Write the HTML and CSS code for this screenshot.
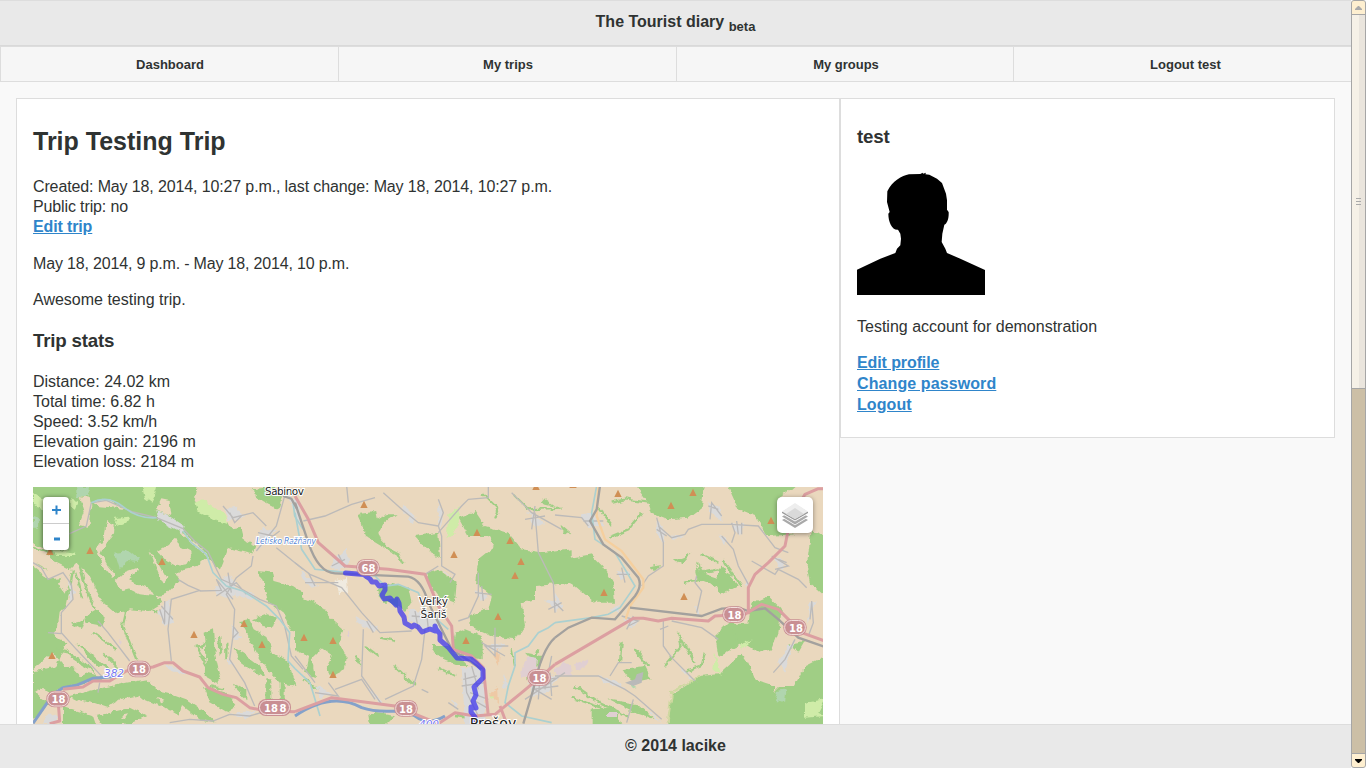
FILE: index.html
```html
<!DOCTYPE html>
<html lang="en">
<head>
<meta charset="utf-8">
<title>The Tourist diary</title>
<link rel="stylesheet" href="styles.css">
</head>
<body>
<div class="page">
  <header class="header"><h1 class="brand">The Tourist diary <sub class="beta">beta</sub></h1></header>
  <nav class="nav">
    <a class="tab">Dashboard</a><a class="tab">My trips</a><a class="tab">My groups</a><a class="tab">Logout test</a>
  </nav>
  <main class="content">
    <section class="card trip">
      <h2 class="title">Trip Testing Trip</h2>
      <p class="text created">Created: May 18, 2014, 10:27 p.m., last change: May 18, 2014, 10:27 p.m.<br>Public trip: no<br><a class="link">Edit trip</a></p>
      <p class="text dates">May 18, 2014, 9 p.m. - May 18, 2014, 10 p.m.</p>
      <p class="text">Awesome testing trip.</p>
      <h3 class="subtitle">Trip stats</h3>
      <p class="text">Distance: 24.02 km<br>Total time: 6.82 h<br><span class="speed">Speed: 3.52 km/h</span><br>Elevation gain: 2196 m<br>Elevation loss: 2184 m</p>
      <div class="map">
        <svg class="tiles" width="790" height="237" viewBox="0 0 790 237">
          <defs>
            <filter id="ragged" x="0" y="0" width="100%" height="100%"><feTurbulence type="fractalNoise" baseFrequency=".13" numOctaves="3" seed="4"/><feDisplacementMap in="SourceGraphic" scale="6" xChannelSelector="R" yChannelSelector="G"/></filter>
            <path id="peak" d="M0-11L11 11H-11Z" fill="#d08f55"/>
            <g id="shield"><rect x="-35" y="-25" width="70" height="50" rx="24" fill="#c98f93"/><rect x="-31" y="-21" width="62" height="42" rx="20" fill="none" stroke="#f3dfdd" stroke-width="3"/></g>
          </defs>
          <rect width="790" height="237" fill="#ead8be"/>
          <g filter="url(#ragged)">
            <rect width="790" height="237" fill="#ead8be"/>
            <!-- western forests -->
            <g transform="translate(0 -1) scale(.33333)">
              <g class="forest">
                <path d="M-9-9H495L485 45 540 95 585 110 595 130 625 125 635 165 670 180 660 205 620 195 585 185 560 250 535 225 500 180 455 140 385 118 365 90 360 70 415 90 410 45 385 40 360 90 310 85 230 45 180 50 165 130 140 130 150 30 90 20 90 40 30 65 30 130 110 190 60 200-9 165Z"/>
                <path d="M-9-9H360L365 90 430 125 480 175 522 212 490 240 450 250 430 265 440 282 400 325 370 330 385 350 345 375 290 370 250 385 205 345 180 290 150 250 110 270 60 260 35 250 0 225Z"/>
                <path d="M-9 235 50 280 95 275 110 310 100 360 80 380 75 420 60 440 75 460 100 470 70 540-9 560ZM155 390 190 370 215 390 210 420 160 410ZM110 410 155 400 145 430ZM130 470 160 490 230 550 190 540ZM100 490 170 540 190 565 120 520ZM60 500 0 550V600L60 590 110 610 120 570Z"/>
                <path d="M0 555 110 545 200 570 210 585 90 600 60 630 30 605 0 625ZM-9 610 50 650 20 690-9 700ZM110 630 190 610 280 590 340 580 380 615 410 650 380 660 310 630 260 640 220 665 190 655 130 640ZM90 660 180 690 190 720H90ZM190 690 290 665 340 690 300 710 210 720ZM335 630 360 610 405 620 460 640 520 680 550 710 500 700 450 660 440 690 390 660Z"/>
                <path d="M515 440 540 430 545 500 565 580 550 590 515 570 520 500ZM555 450 565 450 570 500 560 510ZM490 480 520 470 510 490ZM600 485 640 510 680 540 700 575 660 555 625 530ZM620 405 650 400 665 430 700 450 720 500 770 530 790 600 740 590 700 545 680 520 660 485 645 450ZM660 400 700 385 730 395 720 425 690 420ZM600 590 640 610 640 640 610 615ZM510 600 580 620 610 660 580 680 530 650ZM700 580H715V645H700ZM740 590H755V650H740ZM675 255 720 260 725 285 780 300 810 320V440L770 430 750 380 710 350 695 300ZM650 10 720 3 750 35 740 70 690 45Z"/>
              </g>
              <g class="clearing"><path d="M140 30 170 35 175 60 165 125 140 120 155 80ZM220 105 242 115 240 145 215 180 205 205 225 240 250 270 240 280 205 235 190 190 210 160ZM348 190 365 215 400 275 390 293 375 260ZM375 195 400 180 430 155 440 180 480 200 460 235 430 240 400 225ZM270 260 310 245 315 255 285 280 345 305 360 330 320 325 290 310 270 315 245 285ZM-9 165 35 190 70 230 110 250 130 230 165 265 185 310 200 350 150 330 120 270 60 270 30 240-9 225ZM180 45 225 40 280 70 250 65 190 60ZM90 260 105 290 95 320 75 290Z"/><path d="M120 550 180 550 140 570ZM260 690 285 685 275 700ZM375 635 395 645 380 650Z"/></g>
              <g class="streaks"><path d="M120 250 110 310M140 240 170 340 190 370M130 260 150 340M250 380 280 375 270 420 290 470 310 520M320 360 400 390M180 440 250 490M210 500 270 560M180 510 240 570M490 480 515 520M500 510 530 560M580 470V520M530 600 570 610M60 490 110 500M0 185 60 210"/></g>
              <g class="meadow"><path d="M325-9H375L365 30 355 50 335 35ZM485 50 510 40 580 90 585 115 535 95 490 75ZM250 95 290 92 280 110 245 118ZM60 190 130 200 130 210 70 210ZM0 20 30 40 30 70 0 60ZM110 40 135 45 125 70 110 60Z"/></g>
              <g class="scrub"><path d="M130 3H170V30H130ZM245 200 290 195 320 220 310 228 285 225 260 250ZM0 90 15 100V125H0Z"/></g>
            </g>
            <!-- central forests -->
            <g transform="translate(262 -1) scale(.33333)">
              <g class="forest">
                <path d="M195 80 240 75 245 100 270 85 305 85 265 110 250 140 260 170 235 160 200 130ZM245 315 280 290 340 305 350 350 330 375 300 350 270 350ZM360 150 430 140 435 215 405 200ZM390 260 430 250 485 290 480 350 430 330 400 290ZM0 325 50 345 85 365 110 400 145 430 135 470 155 510 150 550 110 570 95 540 110 510 80 490 50 520 60 570 30 560 40 510 0 490ZM475 480 480 440 510 430 560 450 560 520 500 510ZM410 480 460 480 520 540 490 540 440 520ZM490 95 540 75 570 120 640 140 680 190 750 200 830 190V290L720 300 720 340 680 350 690 420 660 460 590 450 525 420 520 390 580 370 590 330 540 290 550 220 600 180 580 150 520 150ZM220 690 240 680 300 690 270 720H225ZM690 500 740 510 735 550ZM750 40 780 60 740 50Z"/>
              </g>
              <g class="streaks"><path d="M200 110 250 160 280 190 310 205 325 235M190 85 220 150 270 180M560 20 610 70 600 100M660 30 700 70 800 65M180 510 200 540M210 480 250 510M260 455 300 465M300 540 360 600M430 545 480 570M30 580 90 625M480 690 560 700M650 490 660 540M730 490 700 580"/></g>
              <g class="meadow"><path d="M460 85 495 60 490 130 455 160ZM585 620 610 640 590 640Z"/></g>
            </g>
            <!-- eastern forests -->
            <g transform="translate(522 -1) scale(.33333)">
              <g class="forest">
                <path d="M235-9H450L440 65 400 95 340 100 290 80 280 50ZM0 200 50 215 110 205 145 240 175 290 180 350 120 350 60 300 0 265ZM515-9H730L670 40V135L720 145 640 150 600 90 550 70ZM770 130 810 160V330L765 290 755 240ZM420 235 440 260 500 280 480 300 430 280ZM500 240 550 300 500 325 480 290ZM590 350 640 330 680 370 670 440 650 490 610 500 570 470 490 510 480 450 520 410 580 410ZM340 713 350 625 435 570 490 565 560 500 580 530 600 580 660 600 750 540 810 510V730H340ZM700 475 750 465 730 500ZM200 550 270 540 290 580 240 590 210 570ZM110 670 180 665 200 720H110ZM160 640 250 655 300 700 240 680ZM360 220 410 200 380 235ZM280 240 320 235 300 255ZM15 115 50 145 25 140Z"/>
              </g>
              <path class="clearing" d="M660 560 750 540 720 600 675 600 660 615Z"/>
              <g class="streaks"><path d="M170 50 210 40 280 50M160 155 220 130 260 80M130 65 170 120M430 230 440 260 490 250 530 270M500 220 560 300M390 290 450 280M440 205 490 230M200 470 195 530M240 490 280 540M330 540 380 480 370 440M380 460 420 530M450 500 440 540 390 560M530 430 550 460M60 600 130 650 220 690M50 635 180 680"/></g>
              <g class="meadow"><path d="M480 500 500 570 475 550ZM590 460 560 490 550 480ZM750 650 810 640 790 680 810 690 750 695Z"/></g>
              <path d="M355 612 435 572M352 615 337 713" fill="none" stroke="#cfd8a0" stroke-width="6"/>
              <g class="scrub"><path d="M665 615 695 610 690 650 660 645ZM225 590 245 600 230 605Z"/></g>
            </g>
            <g class="town" transform="translate(0 -1) scale(.33333)"><path d="M370 75 400 85 455 120 450 140 380 105ZM545 310 585 265 610 290 600 340 550 325ZM605 310 665 325 655 342 605 325ZM375 380 405 340 420 410 395 420ZM575 70 610 65 630 95 590 105ZM670 160 690 125 735 130 700 165 680 190ZM595 415 625 455 600 460ZM105 280 125 325 110 350ZM400 535 470 560 450 568 405 550ZM590 680 670 675 640 700ZM750 15 800 50V150L780 60ZM585 515 600 535 590 540ZM40 690 75 685V713H30Z"/></g>
            <g class="town" transform="translate(262 -1) scale(.33333)"><path d="M105 240 155 185 160 240 130 255ZM320 55 365 95 355 110 325 75ZM20 255 70 300 50 305 15 270ZM180 390 245 420 240 435 190 415ZM430 40 445 90 435 130 430 90ZM700 80 750 110 720 125ZM340 370 430 380 440 450 390 430 340 400ZM500 545 570 540 570 713H510ZM215 600 265 650 250 650ZM540 310 580 330 560 345ZM750 340 800 350 780 380ZM700 590 800 560 760 620 710 630ZM570 480 630 470 610 500ZM470 640 490 660 480 670ZM60 600 110 620 80 635ZM430 240 470 270 455 265ZM630 560 640 600 620 610Z"/></g>
            <g class="town" transform="translate(522 -1) scale(.33333)"><path d="M80 90 110 80 150 120 100 125ZM185 255 230 260 200 280ZM305 100 330 130 325 175 305 140ZM345 145 385 150 350 160ZM460 50 490 60 500 105 465 80ZM490 145 515 160 510 180ZM530 115 565 115 555 150ZM570 280 585 300 570 298ZM165 370 195 350 190 385ZM205 395 250 400 225 430ZM0 320 25 360 0 375ZM420 350 435 390 425 390ZM760 350 785 345 760 410ZM690 490 720 460 690 560 670 530ZM650 210 690 230 680 255ZM130 570 200 590 210 610 150 590ZM270 650 320 713 300 700ZM370 535 425 590 385 560ZM450 430 490 465ZM0 540 20 560 0 590Z"/></g>
            <g fill="#e0cfd2"><path d="M493 170 505 172 503 190 487 191ZM542 177 553 172 556 176 548 182 543 183ZM522 181 530 175 538 179 539 188 522 187ZM575 224H583V230H575ZM86 152 90 155 87 159ZM315 143 318 148H315Z"/><path d="M460 168 467 160 466 180ZM457 208 464 200 465 216Z" fill="#eec9a5"/><path d="M302 95 314 90 315 106 305 107Z" fill="#f0ebe0"/></g>
          </g>
          <g transform="translate(0 -1) scale(.33333)">
            <g class="road"><path d="M175 50 160 120 110 143 70 148M180 50 220 43 300 78 370 95 450 128 485 165 525 197 565 280 610 300 680 340 730 360 755 420 775 510 810 550M435 280 465 298 500 313 415 340 405 430 415 525M500 315 565 313 550 280 600 340M660 210 655 240 610 275 580 325 605 370 600 450 590 520 635 590 665 660M700 120 660 80 600 95 570 60M755 30 730 120 670 195M730 185 810 250M195 405 225 440 290 525M0 230 25 245 45 280 90 260 115 295 120 340 85 380 85 440 130 490 210 575M45 440 85 443M200 590 195 620M380 370 395 415M590 685 650 690 700 675M410 710 470 700 540 705 590 685M385 360 420 400M395 345V410M590 80 605 110 625 90M675 140 720 150 740 135M585 260 595 320M550 330 610 290 640 325M600 420 615 440 600 455"/></g>
            <path class="river" d="M175 50Q225 25 270 62T370 95M450 135 475 170 520 205 540 260 580 300 630 315 700 360 740 400 770 440 765 525 786 548M780 45 785 90 810 130"/>
            <path d="M0 712 60 625 90 605 130 598 180 577 270 570" class="blue"/><path class="pink" d="M90 610 150 603 180 585 230 585 280 555 360 543 395 530 420 530 450 555 500 573 525 605 570 625 610 635 650 665 700 675 786 677M75 640 80 705 50 713"/>
            <path class="rail" d="M750 30 775 38 792 68"/>
            <use href="#peak" x="51" y="196"/><use href="#peak" x="171" y="193"/><use href="#peak" x="387" y="226"/><use href="#peak" x="483" y="445"/><use href="#peak" x="633" y="412"/><use href="#peak" x="687" y="475"/><use href="#peak" x="57" y="508"/>
          </g>
          <g transform="translate(262 -1) scale(.33333)">
            <g class="road"><path d="M25 105 90 90 170 55 240 35M155 0 160 50M265 20 320 70 370 110 430 120M430 40 445 80 430 120 440 150 440 240 480 265 465 290M430 140 500 60 520 40 580 35V0M0 230 45 265 140 305 200 380 255 440 350 435M30 290 130 290M205 430 200 570 260 655M390 430 380 520 355 600 270 640M650 20 710 80 800 130M720 80 730 200 775 290 780 380M800 350 760 370M400 620 380 610M120 610 200 580 240 640M60 620 130 630 100 590M0 510 60 590M390 265 430 240M600 425 600 510 570 480 640 480M560 470 630 510M490 405 520 395 550 330 550 260M460 650 490 670M510 560 515 620 550 690M500 600 570 590M530 540 550 610M540 645 575 665M690 640 810 560M770 510 750 610M720 610 770 640M110 240 150 220M130 205 150 245M350 390 430 395M360 375 370 430M395 380 400 430M690 100 750 90M720 60 710 130M705 590 790 575M710 610 790 600M735 570 730 640M765 560 770 630M540 320 590 325M560 300 565 345M505 580 545 570M525 620 580 640M40 260 60 300M215 405 235 440"/></g>
            <path class="river" d="M0 80 20 190 60 250 160 260 240 270 270 300 310 295 370 320 390 370 460 430M780 410 760 425 730 440 700 480 660 500 660 540 640 600 630 650 680 690 770 710M0 548 45 590 75 690"/>
            <path d="M0 690Q110 615 200 665C270 690 310 660 360 690Q400 720 450 690" class="blue"/>
            <path class="rail" d="M0 50 40 170Q70 260 120 262L340 272Q380 280 400 350L430 410 470 490 560 550M780 455Q740 490 715 610L685 713"/>
            <path class="pink" d="M0 30 40 100 70 170 150 240 280 250 390 265 430 360 470 420 475 490 530 510 565 545 580 690M0 677 110 635 300 660 430 713 480 680 540 690 600 685 680 620 740 570 780 535M615 660 635 713"/>
            <use href="#peak" x="207" y="55"/><use href="#peak" x="723" y="1"/><use href="#peak" x="546" y="139"/><use href="#peak" x="645" y="163"/><use href="#peak" x="477" y="205"/><use href="#peak" x="678" y="226"/><use href="#peak" x="660" y="268"/><use href="#peak" x="609" y="391"/><use href="#peak" x="513" y="463"/><use href="#peak" x="27" y="454"/><use href="#peak" x="114" y="463"/><use href="#peak" x="114" y="565"/>
          </g>
          <g transform="translate(522 -1) scale(.33333)">
            <g class="road"><path d="M0 87 80 95 100 120M85 105 145 105M305 95 325 170 325 240 280 270 260 300M310 120 350 155 390 145 400 130 440 115 530 115 610 120 660 185 700 200M465 100 470 50 500 90M530 110 540 140 530 170M500 150 535 190 550 240 580 295M590 225 660 265 670 250 730 280 755 305M650 210 700 240 660 250M425 270 420 290 440 315 425 380M325 405 325 480 350 515 420 585M350 405 440 425 490 460M0 570 130 570 210 610 240 630 320 700M165 570 190 530 230 530M235 640 215 710M655 560 690 520 720 460M760 450 775 410 770 345M200 390 250 405 220 420M0 350 25 375M305 130 335 150M185 265 225 265M200 245 210 290M460 60 490 70M545 105 550 145M560 110 560 145M670 220 695 230M215 430 235 390M770 350 765 400M315 430 340 420"/></g>
            <path class="river" d="M125 0 110 80 120 160 180 200 240 300 195 365 160 385 110 395 0 410"/>
            <path d="M130 0 125 90 150 160 200 195 265 280 265 305 225 360 212 400" fill="none" stroke="#f5cf9e" stroke-width="7"/>
            <path class="rail" d="M135 0 125 70 105 105 145 175 200 215 250 275Q262 300 240 330L180 400 110 395 40 425 0 455M225 365 440 390 500 368 550 365 580 375 630 367 670 400 730 455 810 483"/>
            <path class="pink" d="M0 535 235 397 265 397 310 405 350 397 460 405 480 390 570 385 620 355 670 370 710 410 740 440 810 465M580 385 580 305 600 265 640 230 690 180 700 130M735 50 750 25 790 8H810"/>
            <path d="M210 590 240 580 245 565 265 558 260 590 235 600Z" fill="#b9b9b9"/>
            <use href="#peak" x="54" y="-5"/><use href="#peak" x="189" y="22"/><use href="#peak" x="414" y="19"/><use href="#peak" x="348" y="58"/><use href="#peak" x="648" y="103"/><use href="#peak" x="147" y="319"/><use href="#peak" x="387" y="331"/>
          </g>
          <path class="route" d="M312.500 86 331 87.500 334 90 337 92 339 95 343 95 346 99 352 98 352 103 349 108 351 112 357 111 363 118 364 112 366 116 367 124 371 130 372 136 379 140 381 138 385 140 389 145 397 142 402 144 402 139 403 142 407 147 407 153 415 160 424 171 438 172 444 177 450 183 450 191 441 200 443 208 440 214 443 221 438 220 438 225 442 230 441 237"/>
          <path d="M353 113 365 111 365 121Z" fill="#4c5bcf"/>
          <g class="badges">
            <use href="#shield" transform="translate(106 182) scale(.33333)"/><text x="106" y="186">18</text>
            <use href="#shield" transform="translate(25 212) scale(.33333)"/><text x="25.500" y="216">18</text>
            <rect x="225" y="212" width="33" height="17" rx="8" fill="#c98f93"/><rect x="226.500" y="213.500" width="30" height="14" rx="7" fill="none" stroke="#f3dfdd"/><text x="238" y="225">18</text><text x="250" y="225">8</text>
            <use href="#shield" transform="translate(335 80.500) scale(.33333)"/><text x="335.500" y="85">68</text>
            <use href="#shield" transform="translate(373 221.500) scale(.33333)"/><text x="373" y="226">18</text>
            <use href="#shield" transform="translate(506 190.500) scale(.33333)"/><text x="506.500" y="195">18</text>
            <use href="#shield" transform="translate(701 127.500) scale(.33333)"/><text x="701.500" y="132">18</text>
            <use href="#shield" transform="translate(762 140.500) scale(.33333)"/><text x="763" y="145">18</text>
          </g>
          <g class="places">
            <text x="251.500" y="7.500" textLength="39">Sabinov</text><text x="400.500" y="118" textLength="29">Veľký</text><text x="400.500" y="131">Šariš</text><text x="460" y="241" class="city">Prešov</text>
            <text x="253" y="57" class="airfield" textLength="60">Letisko Ražňany</text>
            <text x="81" y="190" class="ref">382</text><text x="396" y="241" class="ref">400</text>
          </g>
        </svg>
        <div class="zoom"><a class="zoombtn"><svg width="26" height="26" viewBox="0 0 26 26"><path d="M12.500 8.500h2v3.500h3.500v2h-3.500v3.500h-2v-3.500h-3.500v-2h3.500Z" fill="#2f85ca"/></svg></a><a class="zoombtn minus"><svg width="26" height="26" viewBox="0 0 26 26"><path d="M11 13.500h6v3h-6Z" fill="#2f85ca"/></svg></a></div>
        <div class="layers">
          <svg width="26" height="26" viewBox="0 0 26 26"><path d="M0 17 13 10 26 17 13 25Z" fill="#a9a9a9"/><path d="M0 14.500 13 7 26 14.500 13 22.300Z" fill="#fff"/><path d="M0 13.500 13 6 26 13.500 13 21.500Z" fill="#aaa"/><path d="M0 11 13 3 26 11 13 18.500Z" fill="#fff"/><path d="M0 9 13 1 26 9V10L13 17.500 0 10Z" fill="#999"/><path d="M0 8.500 13 0 26 8.500 13 16Z" fill="#eee"/><path d="M4 11 13 5 22 11 13 16Z" fill="#d9d9d9"/></svg>
        </div>
      </div>
    </section>
    <aside class="card profile">
      <h3 class="user">test</h3>
      <svg class="avatar" width="128" height="128" viewBox="0 0 384 384"><path d="M0 384V308L70 275 115 258 120 245 130 235 132 215 130 200 123 188C105 190 94 165 94 140L98 135 90 105 91 73C105 43 135 26 156 22L190 21 197 17 198 20 207 17 205 22 217 23 240 35 255 48 267 80 270 100 270 128 275 135C276 155 270 170 262 173L256 200 254 225 265 245 270 258 310 275 384 309V384Z"/></svg>
      <p class="text about">Testing account for demonstration</p>
      <div class="links"><a class="link edit">Edit profile</a><a class="link wide">Change password</a><a class="link wide">Logout</a></div>
    </aside>
  </main>
  <footer class="footer">© 2014 lacike</footer>
</div>
<div class="scrollbar">
  <div class="arrow up"><svg width="13" height="13" viewBox="0 0 13 13"><path d="M3 9V8L6 5H7L10 8V9Z" fill="#aaa"/></svg></div>
  <div class="thumb"><i class="grip"></i></div>
  <div class="track"></div>
  <div class="arrow down"><svg width="13" height="13" viewBox="0 0 13 13"><path d="M3 5H10V6L7 9H6L3 6Z"/></svg></div>
</div>
</body>
</html>
```
FILE: styles.css
```css
* { box-sizing: border-box; }
body { margin: 0; width: 1366px; height: 768px; overflow: hidden; display: flex; background: #f9f9f9; color: #2f3332; font: 16px/20px "Liberation Sans", Arial, sans-serif; }
h1, h2, h3, p { margin: 0; }
.page { width: 1351px; height: 768px; display: flex; flex-direction: column; }
.header { height: 46px; flex: none; background: #e9e9e9; border-top: 1px solid #ddd; border-bottom: 1px solid #d9d9d9; text-align: center; }
.brand { font-size: 16px; line-height: 20px; padding: 11px 0 0; }
.beta { font-size: 13px; line-height: 0; }
.nav { height: 36px; flex: none; display: grid; grid-template-columns: 337px 338px 337px 338px; border: 1px solid #ddd; border-right: 0; background: #f6f6f6; }
.tab { height: 34px; font-size: 13px; font-weight: bold; line-height: 36px; text-align: center; border-left: 1px solid #ddd; }
.tab:first-child { border-left: 0; padding-left: 1px; }
.tab:nth-child(2) { padding-left: 1px; }
.tab:nth-child(3) { padding-left: 2px; }
.tab:last-child { padding-left: 6px; }
.content { flex: 1; min-height: 0; overflow: hidden; display: flex; align-items: flex-start; padding: 16px 16px 0; }
.card { background: #fff; border: 1px solid #ddd; padding: 16px; }
.trip { width: 824px; height: 760px; flex: none; }
.profile { flex: 1; height: 340px; }
.title { font-size: 25px; line-height: 30px; margin: 11px 0 21px; }
.text { margin-bottom: 16px; }
.created { letter-spacing: -.13px; }
.dates { margin-top: 17px; letter-spacing: -.17px; }
.speed { letter-spacing: -.08px; }
.subtitle { font-size: 18.72px; line-height: 24px; margin: 19px 0; letter-spacing: -.2px; }
.link { color: #2f85ca; font-weight: bold; text-decoration: underline; }
.edit { letter-spacing: -.1px; }
.wide { letter-spacing: .1px; }
.map { position: relative; width: 790px; height: 400px; margin-top: -1px; background: #ead8be; overflow: hidden; }
.tiles { display: block; }
.forest { fill: #a0ce85; }
.clearing { fill: #ead8be; }
.meadow { fill: #cfeca8; }
.scrub { fill: #b0d5ae; }
.town { fill: #dadada; }
.streaks { fill: none; stroke: #a0ce85; stroke-width: 7; }
.road { fill: none; stroke: #bcbab9; stroke-width: 4; }
.rail { fill: none; stroke: #a3a19e; stroke-width: 7; }
.river { fill: none; stroke: #abd0d0; stroke-width: 5; }
.pink { fill: none; stroke: #dc9fa1; stroke-width: 9; stroke-linejoin: round; }
.blue { fill: none; stroke: #84a1ca; stroke-width: 9; }
.route { fill: none; stroke: #3f38ee; stroke-opacity: .75; stroke-width: 5; stroke-linecap: round; stroke-linejoin: round; }
.badges text { font: bold 10px "DejaVu Sans", sans-serif; fill: #fff; text-anchor: middle; }
.places text { font: 10.5px "DejaVu Sans", sans-serif; fill: #222; stroke: #fff; stroke-width: 2px; paint-order: stroke; text-anchor: middle; }
.places .city { font-size: 14px; }
.places .airfield { font-size: 8px; font-style: italic; fill: #5b8ad6; }
.places .ref { font-size: 10.5px; font-style: italic; fill: #7777f2; }
.zoom { position: absolute; left: 10px; top: 10px; width: 26px; height: 53px; background: #fff; border-radius: 4px; box-shadow: 0 1px 5px rgba(0,0,0,.65); }
.zoombtn { display: block; height: 26px; }
.zoombtn svg { display: block; }
.minus { height: 27px; border-top: 1px solid #ccc; }
.layers { position: absolute; right: 10px; top: 10px; width: 36px; height: 36px; padding: 6px 5px; background: #fff; border-radius: 5px; box-shadow: 0 1px 5px rgba(0,0,0,.4); }
.user { font-size: 18.72px; line-height: 24px; margin: 10px 0 18px; letter-spacing: -.2px; }
.avatar { display: block; }
.about { margin: 22px 0 15px; }
.links { display: flex; flex-direction: column; align-items: flex-start; line-height: 21px; }
.footer { height: 44px; flex: none; background: #e9e9e9; border-top: 1px solid #ddd; text-align: center; font-weight: bold; line-height: 41px; }
.scrollbar { width: 15px; height: 768px; flex: none; display: flex; flex-direction: column; border: 1px solid #a6a6a6; border-radius: 3px; overflow: hidden; background: #ccbfa6; }
.arrow { height: 14px; flex: none; background: #feefd0; border-bottom: 1px solid #a6a6a6; }
.arrow svg { display: block; }
.down { border-bottom: 0; border-top: 1px solid #a6a6a6; }
.thumb { height: 374px; flex: none; display: flex; align-items: center; justify-content: center; background: linear-gradient(90deg, #f6f1e7 7px, #eae5dd 7px); border-bottom: 1px solid #a6a6a6; }
.grip { width: 5px; height: 7px; background: repeating-linear-gradient(#aaa 0 1px, transparent 1px 3px); }
.track { flex: 1; }
```
